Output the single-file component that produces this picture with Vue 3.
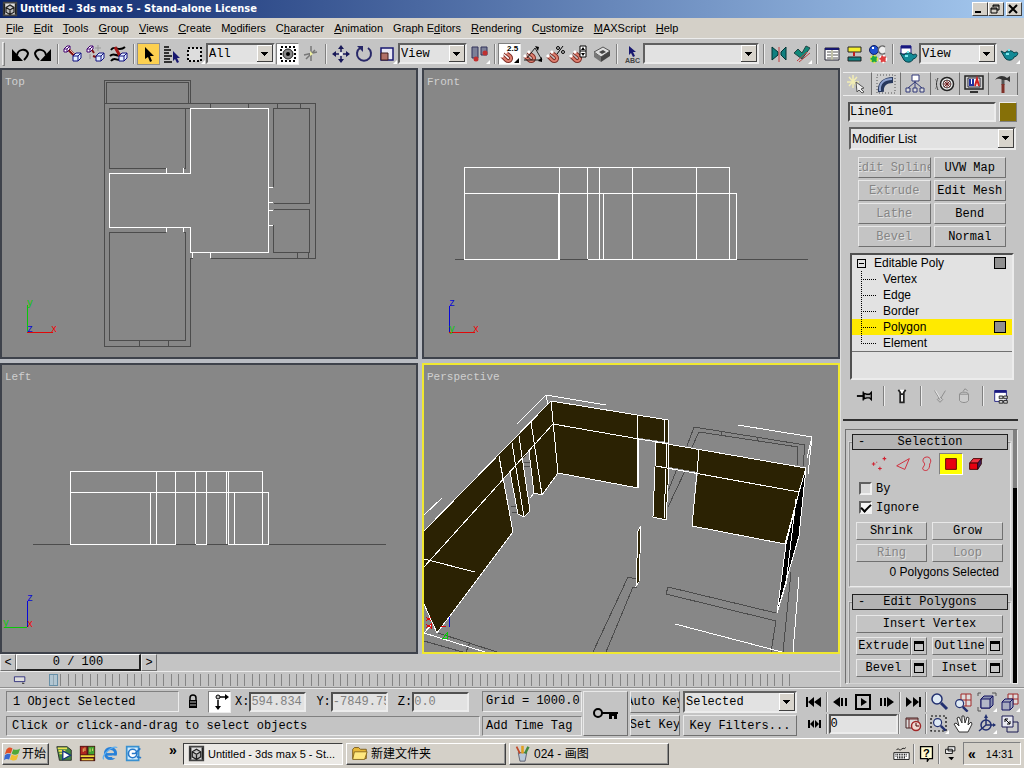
<script setup>
import { ref } from 'vue'

const menus = [
  ['', 'F', 'ile'], ['', 'E', 'dit'], ['', 'T', 'ools'], ['', 'G', 'roup'], ['', 'V', 'iews'],
  ['', 'C', 'reate'], ['M', 'o', 'difiers'], ['C', 'h', 'aracter'], ['', 'A', 'nimation'],
  ['Graph E', 'd', 'itors'], ['', 'R', 'endering'], ['C', 'u', 'stomize'], ['', 'M', 'AXScript'], ['', 'H', 'elp'],
]

const cube = (x, y, s, fill, line) =>
  `<path d="M${x} ${y + 3}l3-3h${s}v${s}l-3 3h-${s}zM${x} ${y + 3}h${s}v${s}m0-${s}l3-3" fill="${fill}" stroke="${line}"/>`
const magnet = '<path d="M5 8l5 4c3 3-1 7-4 4l-4-4" fill="none" stroke="#803028" stroke-width="4"/><path d="M5 8l5 4c3 3-1 7-4 4l-4-4" fill="none" stroke="#e08070" stroke-width="2"/><path d="M5 7l2 2M1 11l2 2" stroke="#fff" stroke-width="3"/>'
const teapot = (x, y) =>
  `<g transform="translate(${x} ${y})"><path d="M0 3l4 2c1-3 8-3 9 0 5-3 5 3 0 4-1 4-7 4-9 1z" fill="#138a96" stroke="#043c44"/><path d="M8 1v2M5 6h3" stroke="#7fe8ee" stroke-width="2"/></g>`
const lens = '<circle cx="7" cy="7" r="5" fill="#dfeaf4" stroke="#223070" stroke-width="1.5"/><path d="M11 11l6 6" stroke="#223070" stroke-width="3"/>'
const fly = '<path d="M20 16v4h-4z" fill="#fff"/>'

const icons = {
  app: '<path d="M2 2h16v16H2z" fill="#ddd" stroke="#444" stroke-width="2"/><path d="M5 8l5-3 5 3v6l-5 3-5-3zM5 8l5 3 5-3M10 11v6" fill="#bbb" stroke="#222" stroke-width="1.5"/><path d="M3 3v14M17 3v14" stroke="#222" stroke-width="2"/>',
  undo: '<path d="M2 5v12h11z"/><path d="M7 11c1-6 9-7 11-2 0 3-2 5-4 7" fill="none" stroke="#000" stroke-width="2"/>',
  redo: '<path d="M18 5v12H7z"/><path d="M13 11C12 5 4 4 2 9c0 3 2 5 4 7" fill="none" stroke="#000" stroke-width="2"/>',
  link: cube(1, 2, 3, '#fff', '#400070') + '<path d="M6 6l6 6" stroke="#801010" stroke-width="3"/><path d="M7 6l5 5" stroke="#e8b0a0"/>' + cube(10, 9, 5, '#e4f0ff', '#101080'),
  unlink: cube(1, 2, 3, '#fff', '#400070') + '<path d="M6 6l2 3M10 13l-3-1" stroke="#801010" stroke-width="2"/><path d="M12 1v6M9 4h6M4 10v5" stroke="#999"/>' + cube(10, 9, 5, '#e4f0ff', '#101080'),
  bind: '<path d="M2 6c4-6 7 3 14-3M1 12c5-5 7 3 12-2M2 17c4-5 6 1 9-2" fill="none" stroke="#000" stroke-width="2"/><path d="M6 3l5 9" stroke="#a01818" stroke-width="3"/>' + cube(10, 9, 5, '#e4f0ff', '#101080'),
  select: '<path d="M6 3l9 9h-4l2 5-2 1-2-5-3 2z"/>',
  byname: '<path d="M2 3h5M2 6h7M2 9h5M2 12h8M2 15h6M2 18h8" stroke="#000" stroke-width="1.5"/><path d="M11 7l7 7h-3l2 4-2 1-2-4-2 2z" fill="#181870"/>',
  region: '<path d="M3 4h13v13H3z" fill="#ddd" stroke="#000" stroke-width="2" stroke-dasharray="2 2"/>' + fly,
  crossing: '<path d="M3 3h14v14H3z" fill="#fff" stroke="#000" stroke-width="2" stroke-dasharray="2 2"/><circle cx="10" cy="10" r="5" fill="#888" stroke="#222"/><circle cx="10" cy="10" r="2"/>',
  manip: '<path d="M10 2v15M3 11l13-3M5 15l9-9" stroke="#777" stroke-width="1.5"/><path d="M9 7l3 3-3 2z" fill="#eef0a0"/>',
  move: '<path d="M10 3v14M3 10h14" stroke="#181858" stroke-width="1.5"/><path d="M10 1l3 4H7zM10 19l3-4H7zM1 10l4-3v6zM19 10l-4-3v6z" fill="#181858"/><circle cx="10" cy="10" r="2" fill="#eee"/>',
  rotate: '<path d="M6 4a7 7 0 1 0 8 0" fill="none" stroke="#282868" stroke-width="2"/><path d="M3 2h6v6z" fill="#282868"/>',
  scale: '<path d="M4 4h12v12H4z" fill="#e8e8f4" stroke="#181870" stroke-width="1.5"/><path d="M4 9h7v7H4z" fill="#b07068" stroke="#402020"/>' + fly,
  pivot: '<path d="M2 3h6v11H2zM11 3h6v8h-6z" fill="#7c8098" stroke="#303058"/><circle cx="6" cy="15" r="2.5" fill="#c03030"/><circle cx="15" cy="9" r="2.5" fill="#c03030"/>' + fly,
  snap: magnet + '<text x="7" y="7" font-size="8" font-weight="bold" font-family="Liberation Sans">2.5</text><path d="M19 14v5h-5z"/>',
  angle: magnet + '<path d="M1 16h18L12 4 4 14" fill="none" stroke="#222"/><path d="M12 2l4 1-1 4zM19 13v5l-4-1z"/>',
  percent: magnet + '<path d="M17 2l-6 8" stroke="#000"/><circle cx="12" cy="4" r="1.5" fill="none" stroke="#000"/><circle cx="17" cy="8" r="1.5" fill="none" stroke="#000"/>',
  spinner: magnet + '<path d="M11 2h6v11h-6zM11 7h6" fill="#fff" stroke="#000"/><path d="M12 6l2-3 2 3zM12 9l2 3 2-3z"/>',
  edge: '<path d="M2 8l9-5 7 4-9 6z" fill="#ddd" stroke="#555"/><path d="M2 8l7 5v5l-7-5z" fill="#777"/><path d="M9 13l9-6v5l-9 6z" fill="#444"/><path d="M7 8l4-2 3 2-4 2z" fill="#444"/>',
  named: '<path d="M7 2l7 6h-3l2 4-2 1-2-4-2 2z" fill="#181870"/><text x="3" y="19" font-size="7" font-weight="bold" font-family="Liberation Sans" fill="#444">ABC</text>',
  mirror: '<path d="M3 3v13l6-5V8z" fill="#108080" stroke="#033"/><path d="M17 3v13l-5-5V8z" fill="#108080" stroke="#033"/><path d="M10 3v15" stroke="#c04040"/>',
  align: '<path d="M2 9l4-4 4 4 4-7 4 2-8 11z" fill="#108878" stroke="#244"/><path d="M7 18l11-9M5 17l10-9" stroke="#c04040"/>' + fly,
  curve: '<path d="M3 4h14v12H3z" fill="#fff" stroke="#223"/><path d="M3 5h14" stroke="#181870" stroke-width="2"/><path d="M5 8h4M5 11h4M5 14h4M11 8h5M11 11h5M11 14h5" stroke="#555"/><path d="M10 6v10" stroke="#aa8" stroke-width="1.5"/>',
  schematic: '<path d="M3 3h13v5H3z" fill="#f4ee30" stroke="#222"/><path d="M3 13h13v4H3z" fill="#108080" stroke="#222"/><path d="M9 8v4" stroke="#c02020" stroke-width="2"/>',
  material: '<circle cx="6" cy="6" r="4.5" fill="#2050d0" stroke="#102060"/><path d="M17 3a4 4 0 1 0 0 6" fill="#eee" stroke="#666" stroke-width="1.5"/><circle cx="6" cy="15" r="3.5" fill="#20a840" stroke="#e8e840" stroke-width="1.5" stroke-dasharray="2 2"/><circle cx="15" cy="15" r="3.5" fill="#e04040" stroke="#fff" stroke-width="1.5" stroke-dasharray="2 2"/><path d="M4 4h2" stroke="#fff" stroke-width="2"/>',
  render: '<path d="M3 2h10v8H3z" fill="#fff" stroke="#181880"/><path d="M3 3h10" stroke="#181880" stroke-width="3"/>' + teapot(2, 6),
  quick: teapot(1, 4) + fly,
  create: '<path d="M6 1v13M0 8h12M2 3l8 9M10 3l-8 9" stroke="#f2edb4" stroke-width="1.5"/><path d="M9 8l8 6-3 1 3 3-2 1-3-3-2 2z" fill="#eee" stroke="#555"/>',
  modify: '<path d="M1 1h18v18H1z" fill="none" stroke="#555" stroke-dasharray="1 2"/><path d="M5 18C4 10 9 6 17 6" fill="none" stroke="#28385c" stroke-width="6"/><path d="M4 17C3 9 8 5 16 5" fill="none" stroke="#90a4d0" stroke-width="2"/>',
  hierarchy: '<path d="M7 1h7v6H7z" fill="#fff" stroke="#303878"/><path d="M10 7v7M10 8l-7 6M10 8l7 6" stroke="#303878" fill="none"/><path d="M1 14h4v4H1zM8 14h4v4H8zM15 14h4v4h-4z" fill="#ddd" stroke="#303878"/>',
  motion: '<circle cx="12" cy="10" r="6.5" fill="#eee" stroke="#222" stroke-width="1.5"/><circle cx="12" cy="10" r="4" fill="none" stroke="#555"/><path d="M12 6v8M8 10h8M9 7l6 6M15 7l-6 6" stroke="#702020"/><path d="M3 4c-2 4-2 8 0 12M0 5c-1 3-1 7 0 10" fill="none" stroke="#333"/>',
  display: '<path d="M1 2h18v13H1z" fill="#ccc" stroke="#222" stroke-width="1.5"/><path d="M4 4h12v9H4z" fill="#fff" stroke="#223"/><path d="M6 5v6h3V5" fill="none" stroke="#2030a0" stroke-width="2"/><path d="M11 12l2-7 2 7" fill="none" stroke="#d02020" stroke-width="2"/><path d="M6 18h8" stroke="#333" stroke-width="2"/>',
  hammer: '<path d="M2 6c3-5 9-5 12-2l3-2v6l-3-2H9c-3-2-5-1-7 0z" fill="#333"/><path d="M10 6v5" stroke="#555" stroke-width="3"/><path d="M10 10v9" stroke="#803028" stroke-width="3"/>',
  pin: '<path d="M1 10h7" stroke="#000" stroke-width="2"/><path d="M8 5v10M9 7l3 1h3l2-2v8l-2-2h-3l-3 1z" fill="#aaa" stroke="#000" stroke-width="1.5"/>',
  endres: '<path d="M6 3l2 3v11h4V6l2-3M8 8h4" fill="#fff" stroke="#222" stroke-width="2"/>',
  unique: '<path d="M4 4l6 10 6-10M7 14l3 3 3-3-3-3z" fill="none" stroke="#888"/><path d="M5 4l6 10" stroke="#eee"/>',
  trash: '<path d="M5 8h10v7c-2 3-8 3-10 0zM5 8c1-3 9-3 10 0M9 5l2-3 3 2" fill="#ccc" stroke="#888"/>',
  config: '<path d="M3 4h13v12H3z" fill="#fff" stroke="#181880"/><path d="M3 5h13" stroke="#181880" stroke-width="3"/><path d="M8 10h4v3H8zM13 10h4v3h-4zM8 15h4v3H8zM13 15h4v3h-4z" fill="#ccc" stroke="#222"/>',
  vertex: '<path d="M2 10h4M4 8v4M9 15h4M11 13v4M14 4h4M16 2v4M7 8h1" stroke="#d02030" stroke-width="1.2"/>',
  edgeSel: '<path d="M3 12l14-8-5 12z" fill="none" stroke="#d02030"/>',
  border: '<path d="M7 3c6-3 9 3 6 7 0 6-3 8-6 7-5-2 2-5 0-8-2-2-2-4 0-6z" fill="none" stroke="#d02030"/>',
  polygon: '<path d="M4 4h12v12H4z" fill="#e80010" stroke="#500"/>',
  element: '<path d="M4 9l4-5h10l-4 5z" fill="#f03040" stroke="#400"/><path d="M4 9h9v7H4z" fill="#e80010" stroke="#400"/><path d="M13 9l4-5v6l-4 6z" fill="#402060" stroke="#300"/>',
  lock: '<path d="M7 9V6c0-4 6-4 6 0v3" fill="none" stroke="#000" stroke-width="1.5"/><path d="M6 8h8v8H6z"/><path d="M7 10h6M7 13h6" stroke="#bbb"/>',
  abs: '<circle cx="8" cy="5" r="2" fill="#bbb" stroke="#000"/><path d="M10 5h7M8 8v9" stroke="#000" stroke-width="1.5"/><path d="M15 2l4 3-4 3zM5 14l3 4 3-4z"/>',
  keyframe: '<path d="M3 6h13v6H3z" fill="#ddd" stroke="#181870"/><path d="M13 13l3 1-3 1z"/>',
  start: '<path d="M2 5h2v10H2zM10 5v10l-6-5zM17 5v10l-7-5z"/>',
  prev: '<path d="M10 5v10l-7-5zM11 6h2v8h-2zM15 6h2v8h-2z"/>',
  play: '<path d="M3 3h14v14H3z" fill="none" stroke="#000" stroke-width="2"/><path d="M8 6v8l6-4z"/>',
  next: '<path d="M10 5v10l7-5zM7 6h2v8H7zM3 6h2v8H3z"/>',
  end: '<path d="M16 5h2v10h-2zM3 5v10l6-5zM10 5v10l6-5z"/>',
  keymode: '<path d="M4 6h2v8H4zM15 6h2v8h-2zM10 6v8l-4-4zM11 6v8l4-4z"/>',
  timecfg: '<path d="M3 4h12v10H3z" fill="#ddd" stroke="#422"/><path d="M3 5h12M6 5v9" stroke="#622"/><circle cx="13" cy="12" r="4.5" fill="#f0d8d0" stroke="#a02828" stroke-width="1.5"/><path d="M13 9v3h3" fill="none" stroke="#400"/>',
  zoom: lens,
  zoomAll: '<path d="M8 2h10v12H8zM13 2v12M8 8h10" fill="#ddd" stroke="#a02828"/><g transform="translate(1 6) scale(.8)">' + lens + '</g>',
  extents: '<path d="M4 7l3-3h9v9l-3 3H4z" fill="#8890b0" stroke="#101060"/><path d="M4 7h9v9H4z" fill="#b4b8c8" stroke="#101060"/><path d="M13 7l3-3" stroke="#101060"/><path d="M1 4V1h3M15 1h4v3M1 15v4h3" fill="none" stroke="#555"/>' + fly,
  extentsAll: '<path d="M8 2h10v10H8zM13 2v10M8 7h10" fill="#ddd" stroke="#a02828"/>' + cube(2, 7, 8, '#a8acc0', '#101060') + fly,
  zoomRegion: '<path d="M2 2h15v15H2z" fill="none" stroke="#000" stroke-width="1.2" stroke-dasharray="2 2"/><g transform="translate(3 3) scale(.8)">' + lens + '</g>' + fly,
  hand: '<path d="M6 18l-5-8 2-1 3 3-2-8 2-1 3 6V2h2l1 7 2-6 2 1-1 7 3-3 1 2-4 8z" fill="#fff" stroke="#333"/>',
  arc: '<circle cx="9" cy="11" r="5" fill="none" stroke="#223070" stroke-width="1.5"/><path d="M9 11V2M9 11h9M9 11l-7 6" stroke="#223070" stroke-width="1.5"/><path d="M9 0l2 4H7zM19 11l-3-2v4z" fill="#223070"/>' + fly,
  maximize: '<path d="M7 8h11v10H7z" fill="#ccc" stroke="#181850"/><path d="M2 2h11v11H2z" fill="#e8e8f0" stroke="#181850"/><path d="M5 5l5 5M5 8V5h3M10 7v3H7" stroke="#000" fill="none"/>',
  keyboard: '<path d="M1 9h18v8H1z" fill="#fff" stroke="#000"/><path d="M3 11h14M3 13h14M5 15h10" stroke="#000" stroke-width="1.5" stroke-dasharray="1 1"/><path d="M4 6c3-4 3 2 6-1s3 1 5-2" fill="none" stroke="#000"/>',
  help: '<path d="M3 2h14v14h-4l-2 3v-3H3z" fill="#fffbd0" stroke="#000" stroke-width="1.5"/><text x="6" y="14" font-size="13" font-weight="bold" font-family="Liberation Sans">?</text>',
  restoreTray: '<path d="M6 2h8v5H6zM3 5h8v5H3z" fill="#eee" stroke="#000"/><path d="M6 14h7l-3 4z"/>',
  windows: '<path d="M3 5c3-3 5-2 7-1L8 10C6 9 4 9 1 11z" fill="#e05028"/><path d="M11 5c3 1 5 1 8-1l-2 6c-3 2-5 2-8 0z" fill="#50a838"/><path d="M1 12c3-2 5-2 7-1l-2 6c-2-1-4-1-6 1z" fill="#3868d0"/><path d="M9 11c3 2 5 2 8 0l-2 6c-3 2-5 1-8 0z" fill="#f0c030"/>',
  player: '<path d="M1 2h12l5 4v12H4z" fill="#484" stroke="#222"/><path d="M2 4h11M3 7h8M4 10h5" stroke="#f0e050" stroke-width="2"/><path d="M8 7v10l9-5z" fill="#fff" stroke="#103080" stroke-width="1.5"/>',
  deck: '<path d="M1 1h18v18H1z" fill="#501818"/><path d="M2 2h7v9H2z" fill="#b02820"/><path d="M11 2h7v9h-7z" fill="#40a030"/><path d="M2 13h16M3 17h14" stroke="#f0d838" stroke-width="2"/><path d="M5 4v4M13 4v4M7 3v4M16 4v3" stroke="#f0e070"/>',
  ie: '<circle cx="10" cy="10" r="6" fill="none" stroke="#2880d8" stroke-width="3.5"/><path d="M5 11h11" stroke="#2880d8" stroke-width="3"/><path d="M12 14h7" stroke="#d4d0c8" stroke-width="3"/><path d="M2 17C-1 12 12 0 18 3" fill="none" stroke="#60b0f0" stroke-width="1.5"/>',
  outlook: '<path d="M2 2h14v16H2z" fill="#d0ecff" stroke="#3890d0" stroke-width="2"/><circle cx="9" cy="10" r="5" fill="#fff" stroke="#2878c8" stroke-width="2"/><path d="M8 10h4l6-6M14 14l5 1" stroke="#2878c8" stroke-width="2" fill="none"/>',
  folder: '<path d="M2 5l2-2h5l2 2h7v11H2z" fill="#e8b838" stroke="#705010"/><path d="M4 8h15l-3 9H2z" fill="#ffe880" stroke="#806018"/>',
  paint: '<path d="M5 9h10l-2 10H7z" fill="#b8c8d8" stroke="#556"/><path d="M7 10L3 2" stroke="#c04828" stroke-width="2"/><path d="M10 10V1" stroke="#e0a020" stroke-width="3"/><path d="M13 10l4-8" stroke="#408840" stroke-width="3"/>',
}

// '|' is a separator, a name starting with ':' is a drop-down
const toolbar = [
  'undo', 'redo', '|', 'link', 'unlink', 'bind', '|', 'select', 'byname', 'region', ':All', 'crossing', 'manip', '|',
  'move', 'rotate', 'scale', ':View', 'pivot', '|', 'snap', 'angle', 'percent', 'spinner', 'edge', '|', 'named', ':',
  '|', 'mirror', 'align', '|', 'curve', 'schematic', 'material', '|', 'render', ':View', 'quick',
]
const pressed = ['crossing', 'snap']
const tabs = ['create', 'modify', 'hierarchy', 'motion', 'display', 'hammer']
const modButtons = [
  ['Edit Spline', true], ['UVW Map', false], ['Extrude', true], ['Edit Mesh', false],
  ['Lathe', true], ['Bend', false], ['Bevel', true], ['Normal', false],
]
const subObjects = ['Vertex', 'Edge', 'Border', 'Polygon', 'Element']
const level = ref('Polygon')
const stackTools = ['pin', '|', 'endres', '|', 'unique', 'trash', '|', 'config']
const selIcons = ['vertex', 'edgeSel', 'border', 'polygon', 'element']
const objectName = ref('Line01')
const ignore = ref(true)
const byVertex = ref(false)
const coords = [['X:', '594.834'], ['Y:', '-7849.75'], ['Z:', '0.0']]
const quickLaunch = ['player', 'deck', 'ie', 'outlook']
const tasks = [
  ['app', 'Untitled - 3ds max 5 - St...', true],
  ['folder', '新建文件夹', false],
  ['paint', '024 - 画图', false],
]
</script>

<template>
  <div class="app">
    <header class="titlebar">
      <svg class="small-icon" viewBox="0 0 20 20" v-html="icons.app"></svg>
      <h1>Untitled - 3ds max 5 - Stand-alone License</h1>
      <button aria-label="Minimize"><svg viewBox="0 0 12 10"><path d="M2 8h6" stroke="#000" stroke-width="2" /></svg></button>
      <button aria-label="Restore"><svg viewBox="0 0 12 10"><path d="M4 1h6v5H8M4 1v2M2 4h6v5H2zM4 2h6M2 5h6" fill="none" stroke="#000" /></svg></button>
      <button class="close" aria-label="Close"><svg viewBox="0 0 12 10"><path d="M2 1l8 8M10 1L2 9" stroke="#000" stroke-width="2" /></svg></button>
    </header>

    <nav class="menubar">
      <button v-for="m in menus" :key="m.join('')">{{ m[0] }}<u>{{ m[1] }}</u>{{ m[2] }}</button>
    </nav>

    <div class="toolbar">
      <span class="grip"></span>
      <template v-for="(t, i) in toolbar" :key="i">
        <span v-if="t === '|'" class="sep"></span>
        <select v-else-if="t[0] === ':'" class="combo" :class="{ wide: t === ':' }" aria-label="Toolbar list">
          <option>{{ t.slice(1) }}</option>
        </select>
        <button v-else class="tool" :class="{ active: t === 'select', pressed: pressed.includes(t) }" :aria-label="t">
          <svg viewBox="0 0 20 20" v-html="icons[t]"></svg>
        </button>
      </template>
    </div>

    <main class="main">
      <section class="work">
        <div class="views">
          <div class="view">
            <span class="view-label">Top</span>
            <svg viewBox="2 70 414 287">
              <g class="dim">
                <path d="M104.500 103.500v-23h86v23M106.500 103.500v-21h82v21M104.500 103.500h211v155h-105M104.500 103.500v243h86v-88h2" />
                <path d="M166 168.500h-56.500v-60h76v60h-2M185.500 108.500h5M166 232.500h-56.500v108h76v-108h-2" />
                <path d="M273.500 187v-78.500h36v95h-36M273.500 225v27.500h36v-43h-36" />
                <path d="M139.500 340v6M168.500 340v6M210.500 103v5M248.500 103v5M277.500 103v5M300.500 103v5M297.500 252v6M308.500 252v6" />
              </g>
              <g class="lit">
                <path d="M190.500 108.500h78v144h-78v-25h-81v-54h81z" />
                <path d="M166.500 168v5M183.500 168v5M166.500 227v5M183.500 227v5M192.500 252v6M210.500 252v6M268 187.500h5M268 202.500h5M268 210.500h5M268 225.500h5" />
              </g>
              <path class="green" d="M27.500 332v-27" /><path class="red" d="M27 332.500h26" />
              <text class="t-green" x="27" y="306">y</text><text class="t-blue" x="27" y="332">z</text><text class="t-red" x="51" y="332">x</text>
            </svg>
          </div>
          <div class="view">
            <span class="view-label">Front</span>
            <svg viewBox="424 70 414 287">
              <path class="dim" d="M455 259.500h353" />
              <g class="lit">
                <path d="M464.500 259.500v-92h265v92M464.500 193.500h272v66h-149M464.500 259.500h95M559.500 167v92M558.500 193v66" />
                <path d="M587.500 167v92M599.500 167v92M603.500 193v66M632.500 167v92M696.500 167v92" />
              </g>
              <path class="blue" d="M449.500 332v-26" /><path class="red" d="M449 332.500h26" />
              <text class="t-blue" x="449" y="306">z</text><text class="t-green" x="449" y="332">y</text><text class="t-red" x="473" y="332">x</text>
            </svg>
          </div>
          <div class="view">
            <span class="view-label">Left</span>
            <svg viewBox="2 366 414 287">
              <path class="dim" d="M33 545.500h353" />
              <g class="lit">
                <path d="M70.500 545.500v-73h192v73M70.500 493.500h198v52h-41M70.500 545.500h105M195.500 545.500h11" />
                <path d="M150.500 493v52M156.500 472v73M175.500 472v73M195.500 472v73M206.500 472v73M226.500 472v73M228.500 472v73M234.500 493v52" />
              </g>
              <path class="blue" d="M27.500 628v-26" /><path class="green" d="M4 628.500h23" />
              <text class="t-blue" x="27" y="602">z</text><text class="t-red" x="27" y="628">x</text><text class="t-green" x="3" y="627">y</text>
            </svg>
          </div>
          <div class="view current">
            <span class="view-label">Perspective</span>
            <svg viewBox="424 366 414 287">
              <g class="dim">
                <path d="M687 447l7-19 111 18-2 21M692 448l7-15 99 15-1 19M721 433v4M757 438v4" />
                <path d="M677 470l-9 22M685 472l-17 36M593 653l35-75 8 2M606 653l27-65h4" />
                <path d="M776 614l-108-26-2 7 110 27-5 31M791 573l-8 80M424 642l42 12M438 634l59 19M470 643l-4 10" />
                <path d="M524 463l6 1M524 467l6 1M511 507l6 1M512 513l5 1" />
              </g>
              <g class="wall">
                <path d="M551 402l117 19v22l-29-4-1 50-80-15z" />
                <path d="M551 402l2 23-50 55 10 53-76 101-13-29v-73z" />
                <path d="M553 425l-43 48 8 42 6 3 6-6-7-52 6-8 5 42 8 2 16-22z" />
                <path d="M656 443l150 26-7 24-14 52-93-18 6-54-29-5-3 53-13-3z" />
                <path d="M641 527l-2 56-3 4 2-55z" />
              </g>
              <path d="M806 469l-7 24-13 52-9 69 22-77z" />
              <g class="lit">
                <path d="M424 532l127-130 117 19v47M553 425l86 15 25 4M551 402l7 72 80 15 1-50M637 417v72M664 420v24h4" />
                <path d="M424 568l129-143M499 457l14 76-76 101-13-29M512 444l12 74M519 437l11 75-6 6-6-3-8-42M531 423l11 73 16-22M542 496l-8-2-5-42M530 499l4-5M503 480l-4-23" />
                <path d="M424 560l51 13M656 443l150 26-7 24-143-26M656 443l-3 75 13 3 3-53M667 445l-3 75M699 451l-7 76 93 18 14-52" />
                <path d="M806 469l-7 68-22 77 9-69 13-52M796 500l-10 85-9 29M641 527l-2 56-3 4 2-55z" />
                <path d="M517 425l29-29 60 10M546 396l2 9M424 516l18-17M738 426l74 12-4 37M812 438l-5 21M799 578l-6 75M675 625l107 28M424 634l61 19M424 634l8-9" />
              </g>
              <path class="blue" d="M449.500 618v10" /><path class="red" d="M441 627h5M426 618l5 4M426 622l5-4M426 629l5-4v4l-5-4" /><path class="green" d="M443 639l4-5v5z" />
            </svg>
          </div>
        </div>

        <div class="slider-row">
          <button class="raised">&lt;</button>
          <button class="raised frame">0 / 100</button>
          <button class="raised">&gt;</button>
        </div>
        <div class="track">
          <svg class="small-icon" viewBox="0 0 20 20" v-html="icons.keyframe"></svg>
          <div class="ticks">
            <span class="key"></span>
            <i v-for="n in 100" :key="n"></i>
          </div>
        </div>
      </section>

      <aside class="panel">
        <div class="tabs">
          <button v-for="t in tabs" :key="t" :class="{ on: t === 'modify' }" :aria-label="t">
            <svg viewBox="0 0 20 20" v-html="icons[t]"></svg>
          </button>
        </div>
        <div class="name-row">
          <input v-model="objectName" class="sunken" aria-label="Object name">
          <button class="swatch" aria-label="Object color"></button>
        </div>
        <select class="combo modlist" aria-label="Modifiers"><option>Modifier List</option></select>
        <div class="mod-buttons">
          <button v-for="b in modButtons" :key="b[0]" class="raised" :disabled="b[1]">{{ b[0] }}</button>
        </div>

        <div class="stack sunken">
          <div class="stack-row"><span class="expander"></span>Editable Poly<span class="box"></span></div>
          <button
            v-for="s in subObjects" :key="s" class="stack-row sub" :class="{ chosen: s === level }"
            @click="level = s"
          >{{ s }}<span v-if="s === level" class="box"></span></button>
          <div class="stack-end"></div>
        </div>
        <div class="stack-tools">
          <template v-for="(t, i) in stackTools" :key="i">
            <span v-if="t === '|'" class="sep"></span>
            <button v-else :aria-label="t"><svg viewBox="0 0 20 20" v-html="icons[t]"></svg></button>
          </template>
        </div>

        <div class="rollouts">
          <div class="rollout-list">
            <section class="rollout">
              <button class="rollout-head"><span>-</span>Selection</button>
              <div class="sel-icons">
                <button v-for="s in selIcons" :key="s" :class="{ on: s === 'polygon' }" :aria-label="s">
                  <svg viewBox="0 0 20 20" v-html="icons[s]"></svg>
                </button>
              </div>
              <label class="check"><input v-model="byVertex" type="checkbox">By</label>
              <label class="check"><input v-model="ignore" type="checkbox">Ignore</label>
              <div class="pair">
                <button class="raised">Shrink</button>
                <button class="raised">Grow</button>
                <button class="raised" disabled>Ring</button>
                <button class="raised" disabled>Loop</button>
              </div>
              <p class="count">0 Polygons Selected</p>
            </section>
            <section class="rollout open">
              <button class="rollout-head"><span>-</span>Edit Polygons</button>
              <div class="pair">
                <button class="raised full">Insert Vertex</button>
                <div v-for="b in ['Extrude', 'Outline', 'Bevel', 'Inset']" :key="b" class="split">
                  <button class="raised">{{ b }}</button>
                  <button class="raised settings" :aria-label="b + ' settings'"><span></span></button>
                </div>
              </div>
            </section>
          </div>
          <div class="scroll"></div>
        </div>
      </aside>
    </main>

    <footer class="status">
      <div class="status-left">
        <div class="status-row">
          <output class="etched message">1 Object Selected</output>
          <button class="tool" aria-label="Lock"><svg viewBox="0 0 20 20" v-html="icons.lock"></svg></button>
          <button class="tool pressed" aria-label="Absolute mode"><svg viewBox="0 0 20 20" v-html="icons.abs"></svg></button>
          <label v-for="c in coords" :key="c[0]" class="coord">{{ c[0] }}<input class="sunken" :value="c[1]"></label>
        </div>
        <output class="etched prompt">Click or click-and-drag to select objects</output>
      </div>
      <div class="col grid-col">
        <output class="etched">Grid = 1000.0</output>
        <button class="etched">Add Time Tag</button>
      </div>
      <button class="raised big-key" aria-label="Set keys">
        <svg viewBox="0 0 26 14"><circle cx="5" cy="6" r="4" fill="none" stroke="#000" stroke-width="2" /><path d="M9 5h16v2h-1v5h-3V9h-2v3h-3V7H9z" /></svg>
      </button>
      <div class="col key-col">
        <button class="raised">Auto Key</button>
        <button class="raised">Set Key</button>
      </div>
      <div class="col filter-col">
        <select class="combo" aria-label="Key set"><option>Selected</option></select>
        <button class="raised">Key Filters...</button>
      </div>
      <div class="playback">
        <div class="play-row">
          <button class="tool" aria-label="start"><svg viewBox="0 0 20 20" v-html="icons.start"></svg></button>
          <span class="sep tight"></span>
          <button v-for="t in ['prev', 'play', 'next']" :key="t" class="tool" :aria-label="t"><svg viewBox="0 0 20 20" v-html="icons[t]"></svg></button>
          <span class="sep tight"></span>
          <button class="tool" aria-label="end"><svg viewBox="0 0 20 20" v-html="icons.end"></svg></button>
          <span class="sep tight"></span>
          <button v-for="t in ['zoom', 'zoomAll', 'extents', 'extentsAll']" :key="t" class="tool" :aria-label="t"><svg viewBox="0 0 20 20" v-html="icons[t]"></svg></button>
        </div>
        <div class="play-row">
          <button class="tool" aria-label="Key mode"><svg viewBox="0 0 20 20" v-html="icons.keymode"></svg></button>
          <span class="sep tight"></span>
          <input class="sunken frame-no" value="0" aria-label="Current frame">
          <span class="sep tight"></span>
          <button class="tool" aria-label="Time configuration"><svg viewBox="0 0 20 20" v-html="icons.timecfg"></svg></button>
          <span class="sep tight"></span>
          <button v-for="t in ['zoomRegion', 'hand', 'arc', 'maximize']" :key="t" class="tool" :aria-label="t"><svg viewBox="0 0 20 20" v-html="icons[t]"></svg></button>
        </div>
      </div>
    </footer>

    <div class="taskbar">
      <button class="start"><svg viewBox="0 0 20 20" v-html="icons.windows"></svg>开始</button>
      <div class="launch">
        <button v-for="q in quickLaunch" :key="q" :aria-label="q"><svg viewBox="0 0 20 20" v-html="icons[q]"></svg></button>
      </div>
      <span class="more">»</span>
      <button v-for="t in tasks" :key="t[1]" class="task" :class="{ down: t[2] }">
        <svg viewBox="0 0 20 20" v-html="icons[t[0]]"></svg>{{ t[1] }}
      </button>
      <div class="tray">
        <svg viewBox="0 0 20 20" v-html="icons.keyboard"></svg>
        <span class="sep"></span>
        <svg viewBox="0 0 20 20" v-html="icons.help"></svg>
        <span class="sep"></span>
        <svg viewBox="0 0 20 20" v-html="icons.restoreTray"></svg>
        <div class="clock"><span>«</span><time>14:31</time></div>
      </div>
    </div>
  </div>
</template>

<style>
body {
  margin: 0;
  background: #c4c4c4;
}
</style>

<style scoped>
.app {
  --ui: "Liberation Sans", "Noto Sans CJK SC", sans-serif;
  --mono: "Liberation Mono", "Noto Sans CJK SC", monospace;
  display: flex;
  flex-direction: column;
  min-height: 100vh;
  background: #c4c4c4;
  color: #000;
  font: 12px/14px var(--mono);
}

.app * {
  box-sizing: border-box;
}

button, input, select {
  margin: 0;
  padding: 0;
  border: 0;
  border-radius: 0;
  background: none;
  color: inherit;
  font: inherit;
}

svg {
  display: block;
  flex: none;
}

.small-icon {
  width: 16px;
  height: 16px;
}

.raised {
  display: flex;
  align-items: center;
  justify-content: center;
  min-width: 0;
  overflow: hidden;
  white-space: nowrap;
  border: 1px solid;
  border-color: #e8e8e8 #707070 #707070 #e8e8e8;
}

.raised:disabled {
  color: #858585;
  text-shadow: 1px 1px #e0e0e0;
}

.sunken {
  border: 2px solid;
  border-color: #505050 #ececec #ececec #505050;
  background: #e2e2e2;
}

.etched {
  display: flex;
  align-items: center;
  border: 1px solid;
  border-color: #808080 #ececec #ececec #808080;
  white-space: nowrap;
}

.sep {
  flex: none;
  width: 7px;
  height: 20px;
  border-left: 1px solid #808080;
  background: linear-gradient(90deg, #ececec 1px, transparent 1px);
  background-clip: padding-box;
  margin: 0 -3px 0 3px;
}

.sep.tight {
  width: 2px;
  margin: 0;
}

.combo {
  flex: none;
  appearance: none;
  padding: 0 18px 0 1px;
  border: 2px solid;
  border-color: #606060 #ececec #ececec #606060;
  background:
    linear-gradient(#000, #000) right 5px top 7px / 7px 1px no-repeat,
    linear-gradient(#000, #000) right 6px top 8px / 5px 1px no-repeat,
    linear-gradient(#000, #000) right 7px top 9px / 3px 1px no-repeat,
    linear-gradient(#000, #000) right 8px top 10px / 1px 1px no-repeat,
    linear-gradient(#404040, #404040) right 0 top 0 / 1px 100% no-repeat,
    linear-gradient(#404040, #404040) right 0 bottom 0 / 16px 1px no-repeat,
    linear-gradient(#d8d4cc, #d8d4cc) right 1px top 1px / 14px 100% no-repeat,
    linear-gradient(#fff, #fff) right 0 top 0 / 16px 100% no-repeat,
    #e2e2e2;
}

.titlebar {
  display: flex;
  align-items: center;
  height: 18px;
  padding: 0 2px;
  background: linear-gradient(90deg, #0a246a, #a6caf0);
  color: #fff;
}

.titlebar h1 {
  flex: 1;
  margin: 0 0 0 2px;
  font: bold 11px/16px "DejaVu Sans Condensed", sans-serif;
}

.titlebar button {
  width: 16px;
  height: 14px;
  border: 1px solid;
  border-color: #fff #404040 #404040 #fff;
  background: #d4d0c8;
}

.titlebar button svg {
  width: 12px;
  height: 10px;
}

.titlebar .close {
  margin-left: 2px;
}

.menubar {
  display: flex;
  gap: 10px;
  height: 20px;
  padding: 0 6px;
  background: #d4d0c8;
  font: 11px/20px var(--ui);
}

.menubar u {
  text-underline-offset: 1px;
}

.toolbar {
  display: flex;
  align-items: center;
  height: 30px;
  padding: 0 3px 0 2px;
  border-top: 1px solid #ececec;
}

.grip {
  width: 3px;
  height: 24px;
  margin-right: 3px;
  border: 1px solid;
  border-color: #ececec #808080 #808080 #ececec;
}

.tool {
  display: flex;
  align-items: center;
  justify-content: center;
  flex: none;
  width: 23px;
  height: 22px;
}

.tool svg {
  width: 20px;
  height: 20px;
}

.tool.active {
  background: #fcd050;
  border: 1px solid #909090;
}

.tool.pressed {
  background: #fff;
  border: 1px solid;
  border-color: #808080 #ececec #ececec #808080;
}

.toolbar .combo {
  width: 69px;
  height: 21px;
  margin-right: 1px;
}

.toolbar .combo:nth-last-child(2) {
  width: 78px;
}

.toolbar .combo.wide {
  flex: 1;
}

.main {
  display: flex;
  flex: 1;
}

.work {
  display: flex;
  flex-direction: column;
  flex: 1;
  min-width: 0;
}

.views {
  display: grid;
  flex: 1;
  grid-template-columns: 1fr 1fr;
  gap: 4px;
  background: #b9bcc2;
}

.view {
  position: relative;
  border: 2px solid #3e424b;
  background: #878787;
}

.view.current {
  border-color: #f0e830;
}

.view svg {
  width: 100%;
  height: 100%;
  shape-rendering: crispEdges;
}

.view path {
  stroke-width: 1;
}

.view text {
  font: 10px "Liberation Mono", monospace;
}

.view-label {
  position: absolute;
  top: 5px;
  left: 3px;
  color: #d0d0d0;
  font-size: 11px;
}

.dim { fill: none; stroke: #4c4c4c; }
.lit { fill: none; stroke: #fff; }
.wall { fill: #2b2203; }
.red { fill: none; stroke: #e00808; }
.green { fill: none; stroke: #08c808; }
.blue { fill: none; stroke: #0808d8; }
.t-red { fill: #f00808; }
.t-green { fill: #08c808; }
.t-blue { fill: #0808d8; }

.slider-row {
  display: flex;
  height: 17px;
}

.slider-row button {
  width: 16px;
}

.slider-row .frame {
  width: 125px;
  border-width: 1px 2px 2px 1px;
  border-color: #fff #202020 #202020 #fff;
}

.track {
  display: flex;
  align-items: center;
  height: 16px;
  padding: 0 50px 0 12px;
  border-top: 1px solid #ececec;
}

.ticks {
  position: relative;
  display: flex;
  flex: 1;
  height: 12px;
  margin-left: 25px;
  border-right: 1px solid #858585;
}

.ticks i {
  flex: 1;
  border-left: 1px solid #858585;
}

.ticks .key {
  position: absolute;
  left: -4px;
  width: 9px;
  height: 12px;
  border: 1px solid #6890a8;
  background: #a0c8e080;
}

.panel {
  display: flex;
  flex-direction: column;
  width: 184px;
  padding: 4px 6px 3px 2px;
  border-left: 1px solid #e0e0e0;
}

.tabs {
  display: flex;
  height: 24px;
  border-bottom: 1px solid #ececec;
}

.tabs button {
  display: flex;
  flex: 1;
  align-items: center;
  justify-content: center;
  border-top: 1px solid #ececec;
  border-right: 1px solid #707070;
}

.tabs .on {
  background: #cfcfcf;
}

.tabs svg {
  width: 20px;
  height: 20px;
}

.name-row {
  display: flex;
  gap: 3px;
  margin: 6px 1px 0 5px;
}

.name-row input {
  flex: 1;
  min-width: 0;
  height: 20px;
}

.swatch {
  width: 18px;
  border: 1px solid;
  border-color: #ececec #808080 #808080 #ececec;
  background: #867008;
}

.modlist {
  height: 23px;
  margin: 5px 2px 0 6px;
  font: 12px var(--ui);
}

.mod-buttons {
  display: grid;
  grid-template-columns: 1fr 1fr;
  gap: 2px 3px;
  margin: 7px 12px 0 15px;
}

.mod-buttons button {
  height: 21px;
}

.stack {
  margin: 6px 4px 0 7px;
  height: 127px;
  font: 12px/16px var(--ui);
}

.stack-row {
  display: flex;
  align-items: center;
  width: 100%;
  height: 16px;
  padding-left: 5px;
}

.expander {
  width: 9px;
  height: 9px;
  margin-right: 8px;
  border: 1px solid #000;
  background: linear-gradient(#000, #000) center / 5px 1px no-repeat;
}

.sub {
  padding-left: 9px;
}

.sub::before {
  content: "";
  width: 16px;
  height: 16px;
  margin-right: 6px;
  background:
    repeating-linear-gradient(90deg, #000 0 1px, transparent 1px 2px) 0 8px / 16px 1px no-repeat,
    repeating-linear-gradient(#000 0 1px, transparent 1px 2px) 0 0 / 1px 16px no-repeat;
}

.sub:nth-last-child(2)::before {
  background-size: 16px 1px, 1px 8px;
}

.stack-row.chosen {
  background: #ffea00;
}

.box {
  width: 12px;
  height: 12px;
  margin: 0 6px 0 auto;
  border: 1px solid #000;
  background: #909090;
}

.stack-end {
  border-top: 1px solid #707070;
}

.stack-tools {
  display: flex;
  align-items: center;
  justify-content: space-between;
  height: 41px;
  padding: 0 8px 7px 13px;
  border-bottom: 2px solid #303030;
}

.stack-tools svg {
  width: 18px;
  height: 18px;
}

.rollouts {
  display: flex;
  flex: 1;
  margin: 8px 0 0 2px;
  border: 1px solid;
  border-color: #707070 #ececec #ececec #707070;
}

.rollout-list {
  display: flex;
  flex-direction: column;
  flex: 1;
}

.scroll {
  width: 4px;
  background: linear-gradient(#808080 58px, #000 58px);
}

.rollout {
  margin: 12px 2px 0 3px;
  border: 1px solid;
  border-color: #909090 #ececec #ececec #909090;
  outline: 1px solid #d4d4d4;
}

.rollout.open {
  flex: 1;
  margin-top: 15px;
  border-bottom: 0;
}

.rollout-head {
  display: block;
  position: relative;
  width: calc(100% - 4px);
  height: 16px;
  margin: -9px 2px 0;
  border: 1px solid #202020;
  background: #b4b4b4;
  line-height: 14px;
}

.rollout-head span {
  position: absolute;
  left: 5px;
}

.sel-icons {
  display: flex;
  justify-content: center;
  padding: 3px 6px 4px 0;
}

.sel-icons button {
  width: 24px;
  height: 22px;
}

.sel-icons .on {
  border: 1px solid;
  border-color: #808080 #fff #fff #808080;
  background: #ffff00;
}

.sel-icons svg {
  width: 18px;
  height: 18px;
  margin: auto;
}

.check {
  display: flex;
  align-items: center;
  height: 19px;
  padding-left: 9px;
}

.check input {
  appearance: none;
  width: 13px;
  height: 13px;
  margin-right: 4px;
  border: 2px solid;
  border-color: #606060 #f0f0f0 #f0f0f0 #606060;
  background: #d8d8d8;
}

.check input:checked {
  background: #f4f4f4;
}

.check input:checked::before {
  content: "";
  display: block;
  width: 8px;
  height: 4px;
  margin-top: 1px;
  border: solid #000;
  border-width: 0 0 2px 2px;
  transform: rotate(-45deg);
}

.pair {
  display: grid;
  grid-template-columns: 1fr 1fr;
  gap: 4px 5px;
  padding: 5px 7px 0 6px;
}

.pair button {
  height: 18px;
}

.pair .full {
  grid-column: span 2;
}

.split {
  display: flex;
}

.split button:first-child {
  flex: 1;
}

.split .settings {
  width: 16px;
}

.settings span {
  width: 10px;
  height: 10px;
  border: 1px solid #000;
  border-top-width: 3px;
}

.count {
  margin: 2px 11px 6px;
  font: 12px/16px var(--ui);
  text-align: right;
}

.status {
  display: flex;
  height: 51px;
  padding: 3px 2px 2px 6px;
  border-top: 1px solid #909090;
  box-shadow: inset 0 1px #ececec;
}

.status-left {
  display: flex;
  flex-direction: column;
  flex: 1;
  gap: 4px;
  min-width: 0;
}

.status-row {
  display: flex;
  align-items: center;
  height: 21px;
}

.message {
  width: 173px;
  height: 21px;
  margin-right: 2px;
  padding-left: 6px;
}

.status-row .tool {
  margin-right: 4px;
}

.coord {
  display: flex;
  align-items: center;
  margin-right: 10px;
}

.coord input {
  width: 57px;
  height: 20px;
  color: #808080;
}

.prompt {
  height: 21px;
  margin-right: 2px;
  padding-left: 5px;
}

.col {
  display: flex;
  flex-direction: column;
  gap: 2px;
}

.col > * {
  height: 22px;
}

.grid-col {
  width: 100px;
  gap: 4px;
}

.grid-col > * {
  height: 21px;
  padding-left: 3px;
}

.big-key {
  width: 45px;
  height: 45px;
  margin: 0 2px 0 1px;
}

.big-key svg {
  width: 26px;
}

.key-col {
  width: 50px;
  margin-right: 3px;
}

.filter-col {
  width: 114px;
}

.playback {
  width: 220px;
  margin-left: 5px;
}

.play-row {
  display: flex;
  align-items: center;
  justify-content: space-between;
  height: 22px;
}

.frame-no {
  width: 69px;
  height: 20px;
}

.taskbar {
  display: flex;
  align-items: center;
  height: 30px;
  padding: 2px 3px 2px 2px;
  border-top: 1px solid #fff;
  background: #d4d0c8;
  font: 12px/16px var(--ui);
}

.taskbar svg {
  width: 17px;
  height: 17px;
}

.start,
.task {
  display: flex;
  align-items: center;
  height: 22px;
  border: 1px solid;
  border-color: #fff #404040 #404040 #fff;
  box-shadow: inset -1px -1px #909090;
}

.start {
  width: 47px;
  padding-left: 1px;
  gap: 1px;
  white-space: nowrap;
}

.launch {
  display: flex;
  gap: 6px;
  margin-left: 7px;
}

.more {
  flex: none;
  width: 12px;
  margin: -8px 2px 0 27px;
  font-size: 14px;
  font-weight: bold;
}

.task {
  flex: 0 1 160px;
  min-width: 0;
  margin-right: 3px;
  padding-left: 4px;
  gap: 3px;
  overflow: hidden;
  white-space: nowrap;
}

.task.down {
  border-color: #404040 #fff #fff #404040;
  background: #ebe9e5;
  box-shadow: none;
  font-size: 11px;
}

.tray {
  display: flex;
  align-items: center;
  gap: 3px;
  margin-left: auto;
}

.tray .sep {
  margin: 0 -5px 0 0;
}

.clock {
  display: flex;
  align-items: center;
  gap: 10px;
  width: 58px;
  height: 23px;
  padding-left: 4px;
  border: 1px solid;
  border-color: #808080 #fff #fff #808080;
  font-size: 11px;
}

.clock span {
  font-size: 14px;
  font-weight: bold;
}
</style>
